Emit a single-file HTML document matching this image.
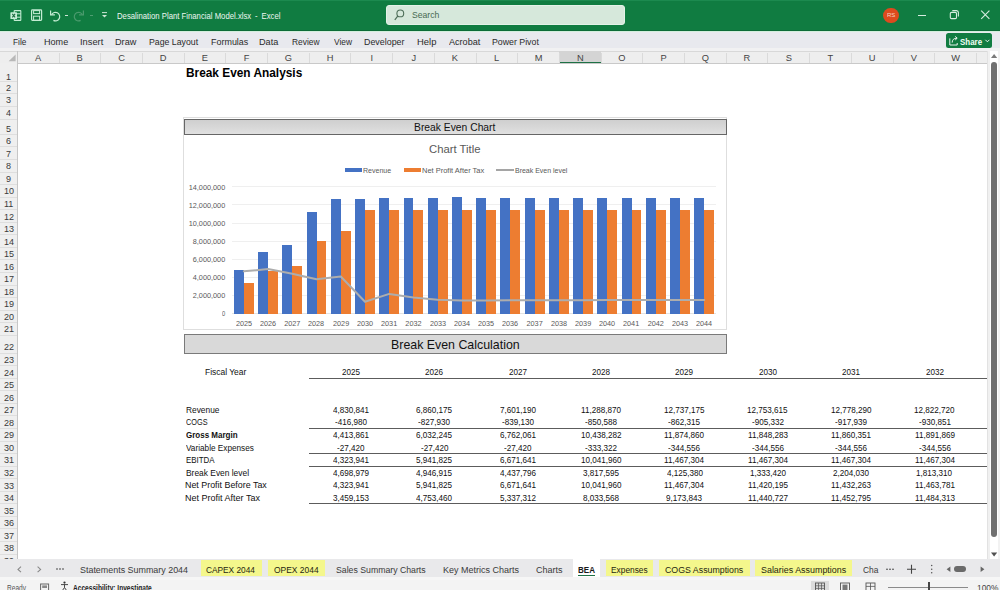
<!DOCTYPE html>
<html><head><meta charset="utf-8"><title>Desalination Plant Financial Model.xlsx - Excel</title>
<style>
*{box-sizing:border-box;margin:0;padding:0}
html,body{width:1000px;height:590px;overflow:hidden;background:#fff;font-family:"Liberation Sans", sans-serif;position:relative}
.a{position:absolute}
.t{position:absolute;white-space:nowrap;line-height:1;transform-origin:0 0}
svg{position:absolute;overflow:visible}
</style></head><body>

<div class="a" style="left:0.00px;top:0.00px;width:1000.00px;height:30.80px;background:#107c41;"></div>
<div class="a" style="left:0.00px;top:0.00px;width:1000.00px;height:1.20px;background:#1c8a4f;"></div>
<div class="a" style="left:0.00px;top:29.60px;width:1000.00px;height:1.20px;background:#0c6b37;"></div>
<div class="a" style="left:0.00px;top:30.70px;width:1000.00px;height:1.40px;background:#d3eedd;"></div>
<div class="t" style="left:116.98px;top:11.62px;font-size:8.8px;font-weight:400;color:#ecf7f0;transform:scaleX(0.8798);">Desalination Plant Financial Model.xlsx - Excel</div>
<div class="a" style="left:385.60px;top:5.30px;width:239.80px;height:19.90px;background:#d6e8db;border-radius:3px;border:1px solid #e4f2e8"></div>
<div class="t" style="left:412.21px;top:10.14px;font-size:9.6px;font-weight:400;color:#466a52;transform:scaleX(0.9002);">Search</div>
<svg style="left:0;top:0" width="1" height="1"><circle cx="400.3" cy="13.4" r="3.4" fill="none" stroke="#4d6e58" stroke-width="1.1"/><line x1="397.9" y1="15.8" x2="394.8" y2="19.9" stroke="#4d6e58" stroke-width="1.2"/></svg>
<div class="a" style="left:883.4px;top:7.5px;width:15.4px;height:15.4px;border-radius:50%;background:#dd4a1e"></div>
<div class="t" style="left:886.72px;top:13.34px;font-size:5.6px;font-weight:400;color:#f6d4c4;transform:scaleX(1.0771);">RS</div>
<div class="a" style="left:918.20px;top:15.20px;width:8.20px;height:1.10px;background:#d6ece0;"></div>
<svg style="left:0;top:0" width="1" height="1"><rect x="950.3" y="12.4" width="6.2" height="6.2" rx="1.2" fill="none" stroke="#d6ece0" stroke-width="1.1"/><path d="M952.3 10.6 H956.5 A2 2 0 0 1 958.4 12.6 V16.6" fill="none" stroke="#d6ece0" stroke-width="1.1"/></svg>
<svg style="left:0;top:0" width="1" height="1"><path d="M981.2 10.6 L989.4 18.8 M989.4 10.6 L981.2 18.8" stroke="#d6ece0" stroke-width="1.1"/></svg>
<svg style="left:0;top:0" width="1" height="1">
<rect x="14.2" y="10.6" width="6.6" height="9.8" rx="0.5" fill="none" stroke="#c4ecd3" stroke-width="1.1"/>
<path d="M16.6 13.8 H20.8 M16.6 17.2 H20.8" stroke="#c4ecd3" stroke-width="1"/>
<rect x="10.4" y="12.2" width="6.6" height="6.8" rx="0.6" fill="#c8eed8"/>
<path d="M12.3 13.9 L15.1 17.3 M15.1 13.9 L12.3 17.3" stroke="#1d6b40" stroke-width="1.1"/>
</svg>
<svg style="left:0;top:0" width="1" height="1">
<rect x="31.6" y="9.9" width="10" height="10.4" rx="0.8" fill="none" stroke="#c4ecd3" stroke-width="1.2"/>
<rect x="33.6" y="10.6" width="6" height="3.0" fill="none" stroke="#c4ecd3" stroke-width="1"/>
<rect x="33.6" y="16.2" width="6" height="4.1" fill="none" stroke="#c4ecd3" stroke-width="1"/>
</svg>
<svg style="left:0;top:0" width="1" height="1">
<path d="M51.6 14.6 A4.3 4.3 0 1 1 53.4 20.4" fill="none" stroke="#c4ecd3" stroke-width="1.2"/>
<path d="M50.6 10.6 V14.9 H54.9" fill="none" stroke="#c4ecd3" stroke-width="1.2"/>
</svg>
<div class="a" style="left:64.60px;top:14.80px;width:3.40px;height:1.10px;background:#cde6d6;"></div>
<svg style="left:0;top:0" width="1" height="1">
<path d="M82.4 14.6 A4.3 4.3 0 1 0 80.6 20.4" fill="none" stroke="#4a9a6d" stroke-width="1.2"/>
<path d="M83.4 10.6 V14.9 H79.1" fill="none" stroke="#4a9a6d" stroke-width="1.2"/>
</svg>
<div class="a" style="left:89.60px;top:14.80px;width:3.40px;height:1.10px;background:#4f9d72;"></div>
<svg style="left:0;top:0" width="1" height="1"><line x1="102" y1="12.6" x2="107" y2="12.6" stroke="#cde6d6" stroke-width="1"/><path d="M102 15 L104.5 17.6 L107 15 Z" fill="#cde6d6"/></svg>
<div class="a" style="left:0.00px;top:32.10px;width:1000.00px;height:15.80px;background:#e8e9ee;"></div>
<div class="a" style="left:0.00px;top:47.90px;width:1000.00px;height:3.10px;background:#f1f1f2;"></div>
<div class="t" style="left:13.24px;top:36.71px;font-size:9.4px;font-weight:400;color:#2b2b2b;transform:scaleX(0.8812);">File</div>
<div class="t" style="left:44.07px;top:36.71px;font-size:9.4px;font-weight:400;color:#2b2b2b;transform:scaleX(0.9675);">Home</div>
<div class="t" style="left:79.76px;top:36.71px;font-size:9.4px;font-weight:400;color:#2b2b2b;transform:scaleX(0.9908);">Insert</div>
<div class="t" style="left:115.27px;top:36.71px;font-size:9.4px;font-weight:400;color:#2b2b2b;transform:scaleX(0.9766);">Draw</div>
<div class="t" style="left:149.10px;top:36.71px;font-size:9.4px;font-weight:400;color:#2b2b2b;transform:scaleX(0.9330);">Page Layout</div>
<div class="t" style="left:210.68px;top:36.71px;font-size:9.4px;font-weight:400;color:#2b2b2b;transform:scaleX(0.9550);">Formulas</div>
<div class="t" style="left:259.17px;top:36.71px;font-size:9.4px;font-weight:400;color:#2b2b2b;transform:scaleX(0.9747);">Data</div>
<div class="t" style="left:291.83px;top:36.71px;font-size:9.4px;font-weight:400;color:#2b2b2b;transform:scaleX(0.8943);">Review</div>
<div class="t" style="left:333.66px;top:36.71px;font-size:9.4px;font-weight:400;color:#2b2b2b;transform:scaleX(0.8927);">View</div>
<div class="t" style="left:363.99px;top:36.71px;font-size:9.4px;font-weight:400;color:#2b2b2b;transform:scaleX(0.9470);">Developer</div>
<div class="t" style="left:416.94px;top:36.71px;font-size:9.4px;font-weight:400;color:#2b2b2b;transform:scaleX(1.0061);">Help</div>
<div class="t" style="left:448.70px;top:36.71px;font-size:9.4px;font-weight:400;color:#2b2b2b;transform:scaleX(0.9680);">Acrobat</div>
<div class="t" style="left:492.00px;top:36.71px;font-size:9.4px;font-weight:400;color:#2b2b2b;transform:scaleX(0.9362);">Power Pivot</div>
<div class="a" style="left:946.00px;top:33.00px;width:46.00px;height:15.40px;background:#107c41;border-radius:2.5px"></div>
<div class="t" style="left:959.56px;top:36.91px;font-size:9.4px;font-weight:700;color:#f0fff5;transform:scaleX(0.8464);">Share</div>
<svg style="left:0;top:0" width="1" height="1"><path d="M949.8 38.4 V45 H957.2 V43 M952.2 42.6 C952.2 39.8 953.8 38.2 956.8 38.2 M955.2 36.4 L957.2 38.2 L955.2 40" fill="none" stroke="#fff" stroke-width="0.9"/><path d="M985.4 39.8 L987.4 41.8 L989.4 39.8" fill="none" stroke="#fff" stroke-width="0.9"/></svg>
<div class="a" style="left:0.00px;top:51.00px;width:987.00px;height:12.40px;background:#eeeeee;"></div>
<div class="a" style="left:0.00px;top:50.50px;width:987.00px;height:1.00px;background:#d8d8d8;"></div>
<div class="a" style="left:17.30px;top:62.80px;width:969.70px;height:1.00px;background:#c9c9c9;"></div>
<div class="a" style="left:559.40px;top:51.40px;width:41.70px;height:12.00px;background:#d4d4d4;"></div>
<div class="a" style="left:559.40px;top:61.90px;width:41.70px;height:1.60px;background:#1e7145;"></div>
<div class="a" style="left:58.50px;top:53.00px;width:1.00px;height:9.80px;background:#dadada;"></div>
<div class="t" style="left:35.06px;top:53.59px;font-size:9.3px;font-weight:400;color:#444;">A</div>
<div class="a" style="left:100.20px;top:53.00px;width:1.00px;height:9.80px;background:#dadada;"></div>
<div class="t" style="left:76.62px;top:53.59px;font-size:9.3px;font-weight:400;color:#444;">B</div>
<div class="a" style="left:141.90px;top:53.00px;width:1.00px;height:9.80px;background:#dadada;"></div>
<div class="t" style="left:118.13px;top:53.59px;font-size:9.3px;font-weight:400;color:#444;">C</div>
<div class="a" style="left:183.60px;top:53.00px;width:1.00px;height:9.80px;background:#dadada;"></div>
<div class="t" style="left:159.74px;top:53.59px;font-size:9.3px;font-weight:400;color:#444;">D</div>
<div class="a" style="left:225.30px;top:53.00px;width:1.00px;height:9.80px;background:#dadada;"></div>
<div class="t" style="left:201.67px;top:53.59px;font-size:9.3px;font-weight:400;color:#444;">E</div>
<div class="a" style="left:267.00px;top:53.00px;width:1.00px;height:9.80px;background:#dadada;"></div>
<div class="t" style="left:243.63px;top:53.59px;font-size:9.3px;font-weight:400;color:#444;">F</div>
<div class="a" style="left:308.70px;top:53.00px;width:1.00px;height:9.80px;background:#dadada;"></div>
<div class="t" style="left:284.84px;top:53.59px;font-size:9.3px;font-weight:400;color:#444;">G</div>
<div class="a" style="left:350.40px;top:53.00px;width:1.00px;height:9.80px;background:#dadada;"></div>
<div class="t" style="left:326.70px;top:53.59px;font-size:9.3px;font-weight:400;color:#444;">H</div>
<div class="a" style="left:392.10px;top:53.00px;width:1.00px;height:9.80px;background:#dadada;"></div>
<div class="t" style="left:370.47px;top:53.59px;font-size:9.3px;font-weight:400;color:#444;">I</div>
<div class="a" style="left:433.80px;top:53.00px;width:1.00px;height:9.80px;background:#dadada;"></div>
<div class="t" style="left:411.40px;top:53.59px;font-size:9.3px;font-weight:400;color:#444;">J</div>
<div class="a" style="left:475.50px;top:53.00px;width:1.00px;height:9.80px;background:#dadada;"></div>
<div class="t" style="left:451.73px;top:53.59px;font-size:9.3px;font-weight:400;color:#444;">K</div>
<div class="a" style="left:517.20px;top:53.00px;width:1.00px;height:9.80px;background:#dadada;"></div>
<div class="t" style="left:494.04px;top:53.59px;font-size:9.3px;font-weight:400;color:#444;">L</div>
<div class="a" style="left:558.90px;top:53.00px;width:1.00px;height:9.80px;background:#dadada;"></div>
<div class="t" style="left:534.69px;top:53.59px;font-size:9.3px;font-weight:400;color:#444;">M</div>
<div class="a" style="left:600.60px;top:53.00px;width:1.00px;height:9.80px;background:#dadada;"></div>
<div class="t" style="left:576.90px;top:53.59px;font-size:9.3px;font-weight:400;color:#444;">N</div>
<div class="a" style="left:642.30px;top:53.00px;width:1.00px;height:9.80px;background:#dadada;"></div>
<div class="t" style="left:618.35px;top:53.59px;font-size:9.3px;font-weight:400;color:#444;">O</div>
<div class="a" style="left:684.00px;top:53.00px;width:1.00px;height:9.80px;background:#dadada;"></div>
<div class="t" style="left:660.42px;top:53.59px;font-size:9.3px;font-weight:400;color:#444;">P</div>
<div class="a" style="left:725.70px;top:53.00px;width:1.00px;height:9.80px;background:#dadada;"></div>
<div class="t" style="left:701.75px;top:53.59px;font-size:9.3px;font-weight:400;color:#444;">Q</div>
<div class="a" style="left:767.40px;top:53.00px;width:1.00px;height:9.80px;background:#dadada;"></div>
<div class="t" style="left:743.54px;top:53.59px;font-size:9.3px;font-weight:400;color:#444;">R</div>
<div class="a" style="left:809.10px;top:53.00px;width:1.00px;height:9.80px;background:#dadada;"></div>
<div class="t" style="left:785.66px;top:53.59px;font-size:9.3px;font-weight:400;color:#444;">S</div>
<div class="a" style="left:850.80px;top:53.00px;width:1.00px;height:9.80px;background:#dadada;"></div>
<div class="t" style="left:827.61px;top:53.59px;font-size:9.3px;font-weight:400;color:#444;">T</div>
<div class="a" style="left:892.50px;top:53.00px;width:1.00px;height:9.80px;background:#dadada;"></div>
<div class="t" style="left:868.80px;top:53.59px;font-size:9.3px;font-weight:400;color:#444;">U</div>
<div class="a" style="left:934.20px;top:53.00px;width:1.00px;height:9.80px;background:#dadada;"></div>
<div class="t" style="left:910.76px;top:53.59px;font-size:9.3px;font-weight:400;color:#444;">V</div>
<div class="a" style="left:975.90px;top:53.00px;width:1.00px;height:9.80px;background:#dadada;"></div>
<div class="t" style="left:951.16px;top:53.59px;font-size:9.3px;font-weight:400;color:#444;">W</div>
<svg style="left:0;top:0" width="1" height="1"><path d="M15.6 54.4 L15.6 61.2 L8.6 61.2 Z" fill="#b8b8b8"/></svg>
<div class="a" style="left:16.90px;top:51.00px;width:1.00px;height:508.00px;background:#c6c6c6;"></div>
<div class="a" style="left:0.00px;top:63.40px;width:16.90px;height:496.00px;background:#efefef;"></div>
<div class="a" style="left:0.00px;top:80.50px;width:16.90px;height:1.00px;background:#dedede;"></div>
<div class="t" style="left:6.26px;top:71.67px;font-size:9.8px;font-weight:400;color:#3a3a3a;transform:scaleX(0.9200);">1</div>
<div class="a" style="left:0.00px;top:93.10px;width:16.90px;height:1.00px;background:#dedede;"></div>
<div class="t" style="left:6.40px;top:82.87px;font-size:9.8px;font-weight:400;color:#3a3a3a;transform:scaleX(0.9200);">2</div>
<div class="a" style="left:0.00px;top:105.60px;width:16.90px;height:1.00px;background:#dedede;"></div>
<div class="t" style="left:6.40px;top:95.37px;font-size:9.8px;font-weight:400;color:#3a3a3a;transform:scaleX(0.9200);">3</div>
<div class="a" style="left:0.00px;top:118.50px;width:16.90px;height:1.00px;background:#dedede;"></div>
<div class="t" style="left:6.44px;top:108.27px;font-size:9.8px;font-weight:400;color:#3a3a3a;transform:scaleX(0.9200);">4</div>
<div class="a" style="left:0.00px;top:133.90px;width:16.90px;height:1.00px;background:#dedede;"></div>
<div class="t" style="left:6.40px;top:123.67px;font-size:9.8px;font-weight:400;color:#3a3a3a;transform:scaleX(0.9200);">5</div>
<div class="a" style="left:0.00px;top:146.45px;width:16.90px;height:1.00px;background:#dedede;"></div>
<div class="t" style="left:6.35px;top:136.22px;font-size:9.8px;font-weight:400;color:#3a3a3a;transform:scaleX(0.9200);">6</div>
<div class="a" style="left:0.00px;top:159.00px;width:16.90px;height:1.00px;background:#dedede;"></div>
<div class="t" style="left:6.40px;top:148.77px;font-size:9.8px;font-weight:400;color:#3a3a3a;transform:scaleX(0.9200);">7</div>
<div class="a" style="left:0.00px;top:171.55px;width:16.90px;height:1.00px;background:#dedede;"></div>
<div class="t" style="left:6.38px;top:161.32px;font-size:9.8px;font-weight:400;color:#3a3a3a;transform:scaleX(0.9200);">8</div>
<div class="a" style="left:0.00px;top:184.10px;width:16.90px;height:1.00px;background:#dedede;"></div>
<div class="t" style="left:6.40px;top:173.87px;font-size:9.8px;font-weight:400;color:#3a3a3a;transform:scaleX(0.9200);">9</div>
<div class="a" style="left:0.00px;top:196.65px;width:16.90px;height:1.00px;background:#dedede;"></div>
<div class="t" style="left:3.72px;top:186.42px;font-size:9.8px;font-weight:400;color:#3a3a3a;transform:scaleX(0.9200);">10</div>
<div class="a" style="left:0.00px;top:209.20px;width:16.90px;height:1.00px;background:#dedede;"></div>
<div class="t" style="left:4.10px;top:198.97px;font-size:9.8px;font-weight:400;color:#3a3a3a;transform:scaleX(0.9200);">11</div>
<div class="a" style="left:0.00px;top:221.75px;width:16.90px;height:1.00px;background:#dedede;"></div>
<div class="t" style="left:3.78px;top:211.52px;font-size:9.8px;font-weight:400;color:#3a3a3a;transform:scaleX(0.9200);">12</div>
<div class="a" style="left:0.00px;top:234.30px;width:16.90px;height:1.00px;background:#dedede;"></div>
<div class="t" style="left:3.74px;top:224.07px;font-size:9.8px;font-weight:400;color:#3a3a3a;transform:scaleX(0.9200);">13</div>
<div class="a" style="left:0.00px;top:246.85px;width:16.90px;height:1.00px;background:#dedede;"></div>
<div class="t" style="left:3.69px;top:236.62px;font-size:9.8px;font-weight:400;color:#3a3a3a;transform:scaleX(0.9200);">14</div>
<div class="a" style="left:0.00px;top:259.40px;width:16.90px;height:1.00px;background:#dedede;"></div>
<div class="t" style="left:3.74px;top:249.17px;font-size:9.8px;font-weight:400;color:#3a3a3a;transform:scaleX(0.9200);">15</div>
<div class="a" style="left:0.00px;top:271.95px;width:16.90px;height:1.00px;background:#dedede;"></div>
<div class="t" style="left:3.74px;top:261.72px;font-size:9.8px;font-weight:400;color:#3a3a3a;transform:scaleX(0.9200);">16</div>
<div class="a" style="left:0.00px;top:284.50px;width:16.90px;height:1.00px;background:#dedede;"></div>
<div class="t" style="left:3.78px;top:274.27px;font-size:9.8px;font-weight:400;color:#3a3a3a;transform:scaleX(0.9200);">17</div>
<div class="a" style="left:0.00px;top:297.05px;width:16.90px;height:1.00px;background:#dedede;"></div>
<div class="t" style="left:3.74px;top:286.82px;font-size:9.8px;font-weight:400;color:#3a3a3a;transform:scaleX(0.9200);">18</div>
<div class="a" style="left:0.00px;top:309.60px;width:16.90px;height:1.00px;background:#dedede;"></div>
<div class="t" style="left:3.76px;top:299.37px;font-size:9.8px;font-weight:400;color:#3a3a3a;transform:scaleX(0.9200);">19</div>
<div class="a" style="left:0.00px;top:322.15px;width:16.90px;height:1.00px;background:#dedede;"></div>
<div class="t" style="left:3.83px;top:311.92px;font-size:9.8px;font-weight:400;color:#3a3a3a;transform:scaleX(0.9200);">20</div>
<div class="a" style="left:0.00px;top:334.70px;width:16.90px;height:1.00px;background:#dedede;"></div>
<div class="t" style="left:3.87px;top:324.47px;font-size:9.8px;font-weight:400;color:#3a3a3a;transform:scaleX(0.9200);">21</div>
<div class="a" style="left:0.00px;top:352.70px;width:16.90px;height:1.00px;background:#dedede;"></div>
<div class="t" style="left:3.90px;top:342.47px;font-size:9.8px;font-weight:400;color:#3a3a3a;transform:scaleX(0.9200);">22</div>
<div class="a" style="left:0.00px;top:365.25px;width:16.90px;height:1.00px;background:#dedede;"></div>
<div class="t" style="left:3.85px;top:355.02px;font-size:9.8px;font-weight:400;color:#3a3a3a;transform:scaleX(0.9200);">23</div>
<div class="a" style="left:0.00px;top:377.80px;width:16.90px;height:1.00px;background:#dedede;"></div>
<div class="t" style="left:3.81px;top:367.57px;font-size:9.8px;font-weight:400;color:#3a3a3a;transform:scaleX(0.9200);">24</div>
<div class="a" style="left:0.00px;top:390.35px;width:16.90px;height:1.00px;background:#dedede;"></div>
<div class="t" style="left:3.85px;top:380.12px;font-size:9.8px;font-weight:400;color:#3a3a3a;transform:scaleX(0.9200);">25</div>
<div class="a" style="left:0.00px;top:402.90px;width:16.90px;height:1.00px;background:#dedede;"></div>
<div class="t" style="left:3.85px;top:392.67px;font-size:9.8px;font-weight:400;color:#3a3a3a;transform:scaleX(0.9200);">26</div>
<div class="a" style="left:0.00px;top:415.45px;width:16.90px;height:1.00px;background:#dedede;"></div>
<div class="t" style="left:3.90px;top:405.22px;font-size:9.8px;font-weight:400;color:#3a3a3a;transform:scaleX(0.9200);">27</div>
<div class="a" style="left:0.00px;top:428.00px;width:16.90px;height:1.00px;background:#dedede;"></div>
<div class="t" style="left:3.85px;top:417.77px;font-size:9.8px;font-weight:400;color:#3a3a3a;transform:scaleX(0.9200);">28</div>
<div class="a" style="left:0.00px;top:440.55px;width:16.90px;height:1.00px;background:#dedede;"></div>
<div class="t" style="left:3.87px;top:430.32px;font-size:9.8px;font-weight:400;color:#3a3a3a;transform:scaleX(0.9200);">29</div>
<div class="a" style="left:0.00px;top:453.10px;width:16.90px;height:1.00px;background:#dedede;"></div>
<div class="t" style="left:3.87px;top:442.87px;font-size:9.8px;font-weight:400;color:#3a3a3a;transform:scaleX(0.9200);">30</div>
<div class="a" style="left:0.00px;top:465.65px;width:16.90px;height:1.00px;background:#dedede;"></div>
<div class="t" style="left:3.92px;top:455.42px;font-size:9.8px;font-weight:400;color:#3a3a3a;transform:scaleX(0.9200);">31</div>
<div class="a" style="left:0.00px;top:478.20px;width:16.90px;height:1.00px;background:#dedede;"></div>
<div class="t" style="left:3.94px;top:467.97px;font-size:9.8px;font-weight:400;color:#3a3a3a;transform:scaleX(0.9200);">32</div>
<div class="a" style="left:0.00px;top:490.75px;width:16.90px;height:1.00px;background:#dedede;"></div>
<div class="t" style="left:3.90px;top:480.52px;font-size:9.8px;font-weight:400;color:#3a3a3a;transform:scaleX(0.9200);">33</div>
<div class="a" style="left:0.00px;top:503.30px;width:16.90px;height:1.00px;background:#dedede;"></div>
<div class="t" style="left:3.85px;top:493.07px;font-size:9.8px;font-weight:400;color:#3a3a3a;transform:scaleX(0.9200);">34</div>
<div class="a" style="left:0.00px;top:515.85px;width:16.90px;height:1.00px;background:#dedede;"></div>
<div class="t" style="left:3.90px;top:505.62px;font-size:9.8px;font-weight:400;color:#3a3a3a;transform:scaleX(0.9200);">35</div>
<div class="a" style="left:0.00px;top:528.40px;width:16.90px;height:1.00px;background:#dedede;"></div>
<div class="t" style="left:3.90px;top:518.17px;font-size:9.8px;font-weight:400;color:#3a3a3a;transform:scaleX(0.9200);">36</div>
<div class="a" style="left:0.00px;top:540.95px;width:16.90px;height:1.00px;background:#dedede;"></div>
<div class="t" style="left:3.94px;top:530.72px;font-size:9.8px;font-weight:400;color:#3a3a3a;transform:scaleX(0.9200);">37</div>
<div class="a" style="left:0.00px;top:553.50px;width:16.90px;height:1.00px;background:#dedede;"></div>
<div class="t" style="left:3.90px;top:543.27px;font-size:9.8px;font-weight:400;color:#3a3a3a;transform:scaleX(0.9200);">38</div>
<div class="a" style="left:0.00px;top:566.05px;width:16.90px;height:1.00px;background:#dedede;"></div>
<div class="t" style="left:3.92px;top:555.82px;font-size:9.8px;font-weight:400;color:#3a3a3a;transform:scaleX(0.9200);">39</div>
<div class="a" style="left:987.00px;top:51.00px;width:13.00px;height:508.00px;background:#ffffff;"></div>
<div class="a" style="left:987.00px;top:51.00px;width:3.00px;height:508.00px;background:#f0f0f0;"></div>
<div class="a" style="left:987.00px;top:51.00px;width:1.00px;height:508.00px;background:#e2e2e2;"></div>
<div class="a" style="left:998.00px;top:51.00px;width:2.00px;height:508.00px;background:#f2f2f2;"></div>
<div class="a" style="left:990.9px;top:62px;width:6.3px;height:474.8px;background:#707070;border-radius:3.2px"></div>
<svg style="left:0;top:0" width="1" height="1"><path d="M991 58 L994.1 54 L997.2 58 Z" fill="#7a7a7a"/><path d="M991 552.6 L994.1 556.6 L997.2 552.6 Z" fill="#505050"/></svg>
<div class="t" style="left:186.43px;top:67.22px;font-size:12.8px;font-weight:700;color:#000;transform:scaleX(0.9267);">Break Even Analysis</div>
<div class="a" style="left:183.4px;top:116.5px;width:544px;height:213.5px;background:#fff;border:1px solid #dedede"></div>
<div class="a" style="left:184.0px;top:118.9px;width:542.6px;height:16.2px;background:linear-gradient(#cfcfcf,#d9d9d9 60%,#e1e1e1);border:1.1px solid #666"></div>
<div class="t" style="left:414.07px;top:121.98px;font-size:11.2px;font-weight:400;color:#111;transform:scaleX(0.9220);">Break Even Chart</div>
<div class="t" style="left:429.03px;top:144.15px;font-size:11.0px;font-weight:400;color:#595959;transform:scaleX(1.0273);">Chart Title</div>
<div class="a" style="left:345.20px;top:167.80px;width:16.60px;height:4.60px;background:#4472c4;"></div>
<div class="t" style="left:363.44px;top:167.75px;font-size:6.3px;font-weight:400;color:#595959;transform:scaleX(1.1142);">Revenue</div>
<div class="a" style="left:404.00px;top:167.80px;width:17.00px;height:4.60px;background:#ed7d31;"></div>
<div class="t" style="left:422.20px;top:167.75px;font-size:6.3px;font-weight:400;color:#595959;transform:scaleX(1.1881);">Net Profit After Tax</div>
<div class="a" style="left:496.00px;top:169.30px;width:18.00px;height:1.80px;background:#a5a5a5;"></div>
<div class="t" style="left:515.04px;top:167.75px;font-size:6.3px;font-weight:400;color:#595959;transform:scaleX(1.1093);">Break Even level</div>
<div class="t" style="left:221.97px;top:310.00px;font-size:7.3px;font-weight:400;color:#595959;transform:scaleX(0.7991);">0</div>
<div class="a" style="left:231.60px;top:294.83px;width:484.80px;height:1.00px;background:#efefef;"></div>
<div class="t" style="left:192.76px;top:291.93px;font-size:7.3px;font-weight:400;color:#595959;">2,000,000</div>
<div class="a" style="left:231.60px;top:276.76px;width:484.80px;height:1.00px;background:#efefef;"></div>
<div class="t" style="left:192.76px;top:273.86px;font-size:7.3px;font-weight:400;color:#595959;">4,000,000</div>
<div class="a" style="left:231.60px;top:258.69px;width:484.80px;height:1.00px;background:#efefef;"></div>
<div class="t" style="left:192.76px;top:255.78px;font-size:7.3px;font-weight:400;color:#595959;">6,000,000</div>
<div class="a" style="left:231.60px;top:240.62px;width:484.80px;height:1.00px;background:#efefef;"></div>
<div class="t" style="left:192.76px;top:237.72px;font-size:7.3px;font-weight:400;color:#595959;">8,000,000</div>
<div class="a" style="left:231.60px;top:222.55px;width:484.80px;height:1.00px;background:#efefef;"></div>
<div class="t" style="left:188.70px;top:219.65px;font-size:7.3px;font-weight:400;color:#595959;">10,000,000</div>
<div class="a" style="left:231.60px;top:204.48px;width:484.80px;height:1.00px;background:#efefef;"></div>
<div class="t" style="left:188.70px;top:201.57px;font-size:7.3px;font-weight:400;color:#595959;">12,000,000</div>
<div class="a" style="left:231.60px;top:186.41px;width:484.80px;height:1.00px;background:#efefef;"></div>
<div class="t" style="left:188.70px;top:183.50px;font-size:7.3px;font-weight:400;color:#595959;">14,000,000</div>
<div class="a" style="left:231.60px;top:313.30px;width:484.80px;height:1.00px;background:#e3e3e3;"></div>
<div class="a" style="left:233.95px;top:270.15px;width:9.90px;height:43.65px;background:#4472c4;"></div>
<div class="a" style="left:243.85px;top:282.55px;width:9.90px;height:31.25px;background:#ed7d31;"></div>
<div class="t" style="left:235.74px;top:320.10px;font-size:7.3px;font-weight:400;color:#595959;transform:scaleX(0.9945);">2025</div>
<div class="a" style="left:258.18px;top:251.82px;width:9.90px;height:61.98px;background:#4472c4;"></div>
<div class="a" style="left:268.08px;top:270.85px;width:9.90px;height:42.95px;background:#ed7d31;"></div>
<div class="t" style="left:259.97px;top:320.10px;font-size:7.3px;font-weight:400;color:#595959;transform:scaleX(0.9945);">2026</div>
<div class="a" style="left:282.41px;top:245.12px;width:9.90px;height:68.68px;background:#4472c4;"></div>
<div class="a" style="left:292.31px;top:265.58px;width:9.90px;height:48.22px;background:#ed7d31;"></div>
<div class="t" style="left:284.20px;top:320.10px;font-size:7.3px;font-weight:400;color:#595959;">2027</div>
<div class="a" style="left:306.64px;top:211.81px;width:9.90px;height:101.99px;background:#4472c4;"></div>
<div class="a" style="left:316.54px;top:241.22px;width:9.90px;height:72.58px;background:#ed7d31;"></div>
<div class="t" style="left:308.43px;top:320.10px;font-size:7.3px;font-weight:400;color:#595959;transform:scaleX(0.9945);">2028</div>
<div class="a" style="left:330.87px;top:198.72px;width:9.90px;height:115.08px;background:#4472c4;"></div>
<div class="a" style="left:340.77px;top:230.91px;width:9.90px;height:82.89px;background:#ed7d31;"></div>
<div class="t" style="left:332.66px;top:320.10px;font-size:7.3px;font-weight:400;color:#595959;transform:scaleX(0.9968);">2029</div>
<div class="a" style="left:355.10px;top:198.57px;width:9.90px;height:115.23px;background:#4472c4;"></div>
<div class="a" style="left:365.00px;top:210.43px;width:9.90px;height:103.37px;background:#ed7d31;"></div>
<div class="t" style="left:356.89px;top:320.10px;font-size:7.3px;font-weight:400;color:#595959;transform:scaleX(0.9922);">2030</div>
<div class="a" style="left:379.33px;top:198.35px;width:9.90px;height:115.45px;background:#4472c4;"></div>
<div class="a" style="left:389.23px;top:210.32px;width:9.90px;height:103.48px;background:#ed7d31;"></div>
<div class="t" style="left:381.12px;top:320.10px;font-size:7.3px;font-weight:400;color:#595959;transform:scaleX(0.9968);">2031</div>
<div class="a" style="left:403.56px;top:197.95px;width:9.90px;height:115.85px;background:#4472c4;"></div>
<div class="a" style="left:413.46px;top:210.04px;width:9.90px;height:103.76px;background:#ed7d31;"></div>
<div class="t" style="left:405.35px;top:320.10px;font-size:7.3px;font-weight:400;color:#595959;">2032</div>
<div class="a" style="left:427.79px;top:197.70px;width:9.90px;height:116.10px;background:#4472c4;"></div>
<div class="a" style="left:437.69px;top:209.90px;width:9.90px;height:103.90px;background:#ed7d31;"></div>
<div class="t" style="left:429.58px;top:320.10px;font-size:7.3px;font-weight:400;color:#595959;transform:scaleX(0.9945);">2033</div>
<div class="a" style="left:452.02px;top:197.43px;width:9.90px;height:116.37px;background:#4472c4;"></div>
<div class="a" style="left:461.92px;top:209.72px;width:9.90px;height:104.08px;background:#ed7d31;"></div>
<div class="t" style="left:453.81px;top:320.10px;font-size:7.3px;font-weight:400;color:#595959;transform:scaleX(0.9899);">2034</div>
<div class="a" style="left:476.25px;top:197.52px;width:9.90px;height:116.28px;background:#4472c4;"></div>
<div class="a" style="left:486.15px;top:209.90px;width:9.90px;height:103.90px;background:#ed7d31;"></div>
<div class="t" style="left:478.04px;top:320.10px;font-size:7.3px;font-weight:400;color:#595959;transform:scaleX(0.9945);">2035</div>
<div class="a" style="left:500.48px;top:197.61px;width:9.90px;height:116.19px;background:#4472c4;"></div>
<div class="a" style="left:510.38px;top:209.90px;width:9.90px;height:103.90px;background:#ed7d31;"></div>
<div class="t" style="left:502.27px;top:320.10px;font-size:7.3px;font-weight:400;color:#595959;transform:scaleX(0.9945);">2036</div>
<div class="a" style="left:524.71px;top:197.61px;width:9.90px;height:116.19px;background:#4472c4;"></div>
<div class="a" style="left:534.61px;top:209.90px;width:9.90px;height:103.90px;background:#ed7d31;"></div>
<div class="t" style="left:526.50px;top:320.10px;font-size:7.3px;font-weight:400;color:#595959;">2037</div>
<div class="a" style="left:548.94px;top:197.61px;width:9.90px;height:116.19px;background:#4472c4;"></div>
<div class="a" style="left:558.84px;top:209.90px;width:9.90px;height:103.90px;background:#ed7d31;"></div>
<div class="t" style="left:550.73px;top:320.10px;font-size:7.3px;font-weight:400;color:#595959;transform:scaleX(0.9945);">2038</div>
<div class="a" style="left:573.17px;top:197.61px;width:9.90px;height:116.19px;background:#4472c4;"></div>
<div class="a" style="left:583.07px;top:209.90px;width:9.90px;height:103.90px;background:#ed7d31;"></div>
<div class="t" style="left:574.96px;top:320.10px;font-size:7.3px;font-weight:400;color:#595959;transform:scaleX(0.9968);">2039</div>
<div class="a" style="left:597.40px;top:197.61px;width:9.90px;height:116.19px;background:#4472c4;"></div>
<div class="a" style="left:607.30px;top:209.90px;width:9.90px;height:103.90px;background:#ed7d31;"></div>
<div class="t" style="left:599.19px;top:320.10px;font-size:7.3px;font-weight:400;color:#595959;transform:scaleX(0.9922);">2040</div>
<div class="a" style="left:621.63px;top:197.61px;width:9.90px;height:116.19px;background:#4472c4;"></div>
<div class="a" style="left:631.53px;top:209.90px;width:9.90px;height:103.90px;background:#ed7d31;"></div>
<div class="t" style="left:623.42px;top:320.10px;font-size:7.3px;font-weight:400;color:#595959;transform:scaleX(0.9968);">2041</div>
<div class="a" style="left:645.86px;top:197.61px;width:9.90px;height:116.19px;background:#4472c4;"></div>
<div class="a" style="left:655.76px;top:209.90px;width:9.90px;height:103.90px;background:#ed7d31;"></div>
<div class="t" style="left:647.65px;top:320.10px;font-size:7.3px;font-weight:400;color:#595959;">2042</div>
<div class="a" style="left:670.09px;top:197.61px;width:9.90px;height:116.19px;background:#4472c4;"></div>
<div class="a" style="left:679.99px;top:209.90px;width:9.90px;height:103.90px;background:#ed7d31;"></div>
<div class="t" style="left:671.88px;top:320.10px;font-size:7.3px;font-weight:400;color:#595959;transform:scaleX(0.9945);">2043</div>
<div class="a" style="left:694.32px;top:197.61px;width:9.90px;height:116.19px;background:#4472c4;"></div>
<div class="a" style="left:704.22px;top:209.90px;width:9.90px;height:103.90px;background:#ed7d31;"></div>
<div class="t" style="left:696.11px;top:320.10px;font-size:7.3px;font-weight:400;color:#595959;transform:scaleX(0.9899);">2044</div>
<svg style="left:0;top:0" width="1" height="1"><path d="M243.85,271.34 L268.08,269.10 L292.31,273.70 L316.54,279.31 L340.77,276.53 L365.00,301.75 L389.23,293.89 L413.46,297.42 L437.69,299.71 L461.92,300.52 L486.15,300.43 L510.38,300.25 L534.61,300.25 L558.84,300.16 L583.07,300.16 L607.30,300.07 L631.53,300.07 L655.76,300.07 L679.99,299.98 L704.22,299.98" fill="none" stroke="#adadad" stroke-width="2.0" stroke-linecap="round" stroke-linejoin="round"/></svg>
<div class="a" style="left:184.0px;top:334.0px;width:542.6px;height:19.8px;background:#d9d9d9;border:1.2px solid #7a7a7a"></div>
<div class="t" style="left:391.01px;top:338.82px;font-size:12.8px;font-weight:400;color:#111;transform:scaleX(0.9672);">Break Even Calculation</div>
<div class="t" style="left:205.22px;top:368.32px;font-size:8.8px;font-weight:400;color:#111;transform:scaleX(0.9598);">Fiscal Year</div>
<div class="t" style="left:341.83px;top:368.32px;font-size:8.8px;font-weight:400;color:#111;transform:scaleX(0.9226);">2025</div>
<div class="t" style="left:425.23px;top:368.32px;font-size:8.8px;font-weight:400;color:#111;transform:scaleX(0.9226);">2026</div>
<div class="t" style="left:508.67px;top:368.32px;font-size:8.8px;font-weight:400;color:#111;transform:scaleX(0.9226);">2027</div>
<div class="t" style="left:592.03px;top:368.32px;font-size:8.8px;font-weight:400;color:#111;transform:scaleX(0.9226);">2028</div>
<div class="t" style="left:675.45px;top:368.32px;font-size:8.8px;font-weight:400;color:#111;transform:scaleX(0.9226);">2029</div>
<div class="t" style="left:758.81px;top:368.32px;font-size:8.8px;font-weight:400;color:#111;transform:scaleX(0.9226);">2030</div>
<div class="t" style="left:842.25px;top:368.32px;font-size:8.8px;font-weight:400;color:#111;transform:scaleX(0.9226);">2031</div>
<div class="t" style="left:925.67px;top:368.32px;font-size:8.8px;font-weight:400;color:#111;transform:scaleX(0.9226);">2032</div>
<div class="t" style="left:185.53px;top:405.87px;font-size:8.8px;font-weight:400;color:#111;transform:scaleX(0.9501);">Revenue</div>
<div class="t" style="left:332.94px;top:405.87px;font-size:8.8px;font-weight:400;color:#111;transform:scaleX(0.9226);">4,830,841</div>
<div class="t" style="left:416.20px;top:405.87px;font-size:8.8px;font-weight:400;color:#111;transform:scaleX(0.9226);">6,860,175</div>
<div class="t" style="left:499.58px;top:405.87px;font-size:8.8px;font-weight:400;color:#111;transform:scaleX(0.9226);">7,601,190</div>
<div class="t" style="left:580.93px;top:405.87px;font-size:8.8px;font-weight:400;color:#111;transform:scaleX(0.9226);">11,288,870</div>
<div class="t" style="left:664.04px;top:405.87px;font-size:8.8px;font-weight:400;color:#111;transform:scaleX(0.9226);">12,737,175</div>
<div class="t" style="left:747.44px;top:405.87px;font-size:8.8px;font-weight:400;color:#111;transform:scaleX(0.9226);">12,753,615</div>
<div class="t" style="left:830.82px;top:405.87px;font-size:8.8px;font-weight:400;color:#111;transform:scaleX(0.9226);">12,778,290</div>
<div class="t" style="left:914.22px;top:405.87px;font-size:8.8px;font-weight:400;color:#111;transform:scaleX(0.9226);">12,822,720</div>
<div class="t" style="left:185.83px;top:418.42px;font-size:8.8px;font-weight:400;color:#111;transform:scaleX(0.8333);">COGS</div>
<div class="t" style="left:334.85px;top:418.42px;font-size:8.8px;font-weight:400;color:#111;transform:scaleX(0.9226);">-416,980</div>
<div class="t" style="left:418.25px;top:418.42px;font-size:8.8px;font-weight:400;color:#111;transform:scaleX(0.9226);">-827,930</div>
<div class="t" style="left:501.65px;top:418.42px;font-size:8.8px;font-weight:400;color:#111;transform:scaleX(0.9226);">-839,130</div>
<div class="t" style="left:585.07px;top:418.42px;font-size:8.8px;font-weight:400;color:#111;transform:scaleX(0.9226);">-850,588</div>
<div class="t" style="left:668.47px;top:418.42px;font-size:8.8px;font-weight:400;color:#111;transform:scaleX(0.9226);">-862,315</div>
<div class="t" style="left:751.91px;top:418.42px;font-size:8.8px;font-weight:400;color:#111;transform:scaleX(0.9226);">-905,332</div>
<div class="t" style="left:835.29px;top:418.42px;font-size:8.8px;font-weight:400;color:#111;transform:scaleX(0.9226);">-917,939</div>
<div class="t" style="left:918.69px;top:418.42px;font-size:8.8px;font-weight:400;color:#111;transform:scaleX(0.9226);">-930,851</div>
<div class="t" style="left:185.88px;top:430.97px;font-size:8.8px;font-weight:700;color:#111;transform:scaleX(0.9098);">Gross Margin</div>
<div class="t" style="left:332.94px;top:430.97px;font-size:8.8px;font-weight:400;color:#111;transform:scaleX(0.9226);">4,413,861</div>
<div class="t" style="left:416.20px;top:430.97px;font-size:8.8px;font-weight:400;color:#111;transform:scaleX(0.9226);">6,032,245</div>
<div class="t" style="left:499.62px;top:430.97px;font-size:8.8px;font-weight:400;color:#111;transform:scaleX(0.9226);">6,762,061</div>
<div class="t" style="left:580.68px;top:430.97px;font-size:8.8px;font-weight:400;color:#111;transform:scaleX(0.9226);">10,438,282</div>
<div class="t" style="left:664.33px;top:430.97px;font-size:8.8px;font-weight:400;color:#111;transform:scaleX(0.9226);">11,874,860</div>
<div class="t" style="left:747.75px;top:430.97px;font-size:8.8px;font-weight:400;color:#111;transform:scaleX(0.9226);">11,848,283</div>
<div class="t" style="left:831.17px;top:430.97px;font-size:8.8px;font-weight:400;color:#111;transform:scaleX(0.9226);">11,860,351</div>
<div class="t" style="left:914.57px;top:430.97px;font-size:8.8px;font-weight:400;color:#111;transform:scaleX(0.9226);">11,891,869</div>
<div class="t" style="left:186.16px;top:443.52px;font-size:8.8px;font-weight:400;color:#111;transform:scaleX(0.9340);">Variable Expenses</div>
<div class="t" style="left:337.10px;top:443.52px;font-size:8.8px;font-weight:400;color:#111;transform:scaleX(0.9226);">-27,420</div>
<div class="t" style="left:420.50px;top:443.52px;font-size:8.8px;font-weight:400;color:#111;transform:scaleX(0.9226);">-27,420</div>
<div class="t" style="left:503.90px;top:443.52px;font-size:8.8px;font-weight:400;color:#111;transform:scaleX(0.9226);">-27,420</div>
<div class="t" style="left:585.11px;top:443.52px;font-size:8.8px;font-weight:400;color:#111;transform:scaleX(0.9226);">-333,322</div>
<div class="t" style="left:668.47px;top:443.52px;font-size:8.8px;font-weight:400;color:#111;transform:scaleX(0.9226);">-344,556</div>
<div class="t" style="left:751.87px;top:443.52px;font-size:8.8px;font-weight:400;color:#111;transform:scaleX(0.9226);">-344,556</div>
<div class="t" style="left:835.27px;top:443.52px;font-size:8.8px;font-weight:400;color:#111;transform:scaleX(0.9226);">-344,556</div>
<div class="t" style="left:918.67px;top:443.52px;font-size:8.8px;font-weight:400;color:#111;transform:scaleX(0.9226);">-344,556</div>
<div class="t" style="left:185.57px;top:456.07px;font-size:8.8px;font-weight:400;color:#111;transform:scaleX(0.9014);">EBITDA</div>
<div class="t" style="left:332.94px;top:456.07px;font-size:8.8px;font-weight:400;color:#111;transform:scaleX(0.9226);">4,323,941</div>
<div class="t" style="left:416.24px;top:456.07px;font-size:8.8px;font-weight:400;color:#111;transform:scaleX(0.9226);">5,941,825</div>
<div class="t" style="left:499.62px;top:456.07px;font-size:8.8px;font-weight:400;color:#111;transform:scaleX(0.9226);">6,671,641</div>
<div class="t" style="left:580.62px;top:456.07px;font-size:8.8px;font-weight:400;color:#111;transform:scaleX(0.9226);">10,041,960</div>
<div class="t" style="left:664.31px;top:456.07px;font-size:8.8px;font-weight:400;color:#111;transform:scaleX(0.9226);">11,467,304</div>
<div class="t" style="left:747.71px;top:456.07px;font-size:8.8px;font-weight:400;color:#111;transform:scaleX(0.9226);">11,467,304</div>
<div class="t" style="left:831.11px;top:456.07px;font-size:8.8px;font-weight:400;color:#111;transform:scaleX(0.9226);">11,467,304</div>
<div class="t" style="left:914.51px;top:456.07px;font-size:8.8px;font-weight:400;color:#111;transform:scaleX(0.9226);">11,467,304</div>
<div class="t" style="left:185.53px;top:468.62px;font-size:8.8px;font-weight:400;color:#111;transform:scaleX(0.9548);">Break Even level</div>
<div class="t" style="left:332.94px;top:468.62px;font-size:8.8px;font-weight:400;color:#111;transform:scaleX(0.9226);">4,698,979</div>
<div class="t" style="left:416.32px;top:468.62px;font-size:8.8px;font-weight:400;color:#111;transform:scaleX(0.9226);">4,946,915</div>
<div class="t" style="left:499.72px;top:468.62px;font-size:8.8px;font-weight:400;color:#111;transform:scaleX(0.9226);">4,437,796</div>
<div class="t" style="left:583.04px;top:468.62px;font-size:8.8px;font-weight:400;color:#111;transform:scaleX(0.9226);">3,817,595</div>
<div class="t" style="left:666.50px;top:468.62px;font-size:8.8px;font-weight:400;color:#111;transform:scaleX(0.9226);">4,125,380</div>
<div class="t" style="left:749.67px;top:468.62px;font-size:8.8px;font-weight:400;color:#111;transform:scaleX(0.9226);">1,333,420</div>
<div class="t" style="left:833.18px;top:468.62px;font-size:8.8px;font-weight:400;color:#111;transform:scaleX(0.9226);">2,204,030</div>
<div class="t" style="left:916.47px;top:468.62px;font-size:8.8px;font-weight:400;color:#111;transform:scaleX(0.9226);">1,813,310</div>
<div class="t" style="left:185.49px;top:481.17px;font-size:8.8px;font-weight:400;color:#111;transform:scaleX(1.0093);">Net Profit Before Tax</div>
<div class="t" style="left:332.94px;top:481.17px;font-size:8.8px;font-weight:400;color:#111;transform:scaleX(0.9226);">4,323,941</div>
<div class="t" style="left:416.24px;top:481.17px;font-size:8.8px;font-weight:400;color:#111;transform:scaleX(0.9226);">5,941,825</div>
<div class="t" style="left:499.62px;top:481.17px;font-size:8.8px;font-weight:400;color:#111;transform:scaleX(0.9226);">6,671,641</div>
<div class="t" style="left:580.62px;top:481.17px;font-size:8.8px;font-weight:400;color:#111;transform:scaleX(0.9226);">10,041,960</div>
<div class="t" style="left:664.31px;top:481.17px;font-size:8.8px;font-weight:400;color:#111;transform:scaleX(0.9226);">11,467,304</div>
<div class="t" style="left:747.75px;top:481.17px;font-size:8.8px;font-weight:400;color:#111;transform:scaleX(0.9226);">11,420,195</div>
<div class="t" style="left:831.15px;top:481.17px;font-size:8.8px;font-weight:400;color:#111;transform:scaleX(0.9226);">11,432,263</div>
<div class="t" style="left:914.57px;top:481.17px;font-size:8.8px;font-weight:400;color:#111;transform:scaleX(0.9226);">11,463,781</div>
<div class="t" style="left:185.48px;top:493.72px;font-size:8.8px;font-weight:400;color:#111;transform:scaleX(1.0245);">Net Profit After Tax</div>
<div class="t" style="left:332.84px;top:493.72px;font-size:8.8px;font-weight:400;color:#111;transform:scaleX(0.9226);">3,459,153</div>
<div class="t" style="left:416.30px;top:493.72px;font-size:8.8px;font-weight:400;color:#111;transform:scaleX(0.9226);">4,753,460</div>
<div class="t" style="left:499.68px;top:493.72px;font-size:8.8px;font-weight:400;color:#111;transform:scaleX(0.9226);">5,337,312</div>
<div class="t" style="left:583.02px;top:493.72px;font-size:8.8px;font-weight:400;color:#111;transform:scaleX(0.9226);">8,033,568</div>
<div class="t" style="left:666.42px;top:493.72px;font-size:8.8px;font-weight:400;color:#111;transform:scaleX(0.9226);">9,173,843</div>
<div class="t" style="left:747.79px;top:493.72px;font-size:8.8px;font-weight:400;color:#111;transform:scaleX(0.9226);">11,440,727</div>
<div class="t" style="left:831.15px;top:493.72px;font-size:8.8px;font-weight:400;color:#111;transform:scaleX(0.9226);">11,452,795</div>
<div class="t" style="left:914.55px;top:493.72px;font-size:8.8px;font-weight:400;color:#111;transform:scaleX(0.9226);">11,484,313</div>
<div class="a" style="left:308.80px;top:377.75px;width:678.20px;height:1.10px;background:#5c5c5c;"></div>
<div class="a" style="left:308.80px;top:427.95px;width:678.20px;height:1.10px;background:#5c5c5c;"></div>
<div class="a" style="left:308.80px;top:453.05px;width:678.20px;height:1.10px;background:#5c5c5c;"></div>
<div class="a" style="left:308.80px;top:465.60px;width:678.20px;height:1.10px;background:#5c5c5c;"></div>
<div class="a" style="left:308.80px;top:503.25px;width:678.20px;height:1.10px;background:#5c5c5c;"></div>
<div class="a" style="left:0.00px;top:559.20px;width:1000.00px;height:18.20px;background:#e9e9eb;"></div>
<div class="a" style="left:0.00px;top:577.40px;width:1000.00px;height:2.60px;background:#f6f6f6;"></div>
<svg style="left:0;top:0" width="1" height="1"><path d="M21 566.6 L18 569.4 L21 572.2" fill="none" stroke="#888" stroke-width="1.1"/><path d="M37.6 566.6 L40.6 569.4 L37.6 572.2" fill="none" stroke="#888" stroke-width="1.1"/><circle cx="57" cy="569" r="0.8" fill="#333"/><circle cx="60" cy="569" r="0.8" fill="#333"/><circle cx="63" cy="569" r="0.8" fill="#333"/></svg>
<div class="t" style="left:80.20px;top:565.14px;font-size:9.6px;font-weight:400;color:#3a3a3a;transform:scaleX(0.9292);">Statements Summary 2044</div>
<div class="a" style="left:201.00px;top:560.20px;width:61.20px;height:16.10px;background:#f4f78c;"></div>
<div class="t" style="left:206.48px;top:565.14px;font-size:9.6px;font-weight:400;color:#1f1f10;transform:scaleX(0.8660);">CAPEX 2044</div>
<div class="a" style="left:268.00px;top:560.20px;width:57.00px;height:16.10px;background:#f4f78c;"></div>
<div class="t" style="left:273.62px;top:565.14px;font-size:9.6px;font-weight:400;color:#1f1f10;transform:scaleX(0.8806);">OPEX 2044</div>
<div class="t" style="left:335.61px;top:565.14px;font-size:9.6px;font-weight:400;color:#3a3a3a;transform:scaleX(0.9089);">Sales Summary Charts</div>
<div class="t" style="left:443.03px;top:565.14px;font-size:9.6px;font-weight:400;color:#3a3a3a;transform:scaleX(0.9379);">Key Metrics Charts</div>
<div class="t" style="left:535.55px;top:565.14px;font-size:9.6px;font-weight:400;color:#3a3a3a;transform:scaleX(0.9379);">Charts</div>
<div class="a" style="left:572.50px;top:559.20px;width:27.50px;height:18.20px;background:#ffffff;"></div>
<div class="t" style="left:578.23px;top:565.14px;font-size:9.6px;font-weight:700;color:#1a1a1a;transform:scaleX(0.8380);">BEA</div>
<div class="a" style="left:578.20px;top:574.80px;width:16.60px;height:1.30px;background:#1e7145;"></div>
<div class="a" style="left:606.00px;top:560.20px;width:47.00px;height:16.10px;background:#f4f78c;"></div>
<div class="t" style="left:611.08px;top:565.14px;font-size:9.6px;font-weight:400;color:#1f1f10;transform:scaleX(0.8711);">Expenses</div>
<div class="a" style="left:658.75px;top:560.20px;width:91.25px;height:16.10px;background:#f4f78c;"></div>
<div class="t" style="left:665.06px;top:565.14px;font-size:9.6px;font-weight:400;color:#1f1f10;transform:scaleX(0.9169);">COGS Assumptions</div>
<div class="a" style="left:754.50px;top:560.20px;width:97.50px;height:16.10px;background:#f4f78c;"></div>
<div class="t" style="left:760.60px;top:565.14px;font-size:9.6px;font-weight:400;color:#1f1f10;transform:scaleX(0.9285);">Salaries Assumptions</div>
<div class="t" style="left:863.33px;top:565.14px;font-size:9.6px;font-weight:400;color:#3a3a3a;transform:scaleX(0.8754);">Cha</div>
<svg style="left:0;top:0" width="1" height="1"><circle cx="887" cy="569.2" r="0.8" fill="#333"/><circle cx="890" cy="569.2" r="0.8" fill="#333"/><circle cx="893" cy="569.2" r="0.8" fill="#333"/><path d="M907 569.2 H916 M911.5 564.7 V573.7" stroke="#444" stroke-width="1.1"/><circle cx="931.7" cy="565.6" r="0.75" fill="#555"/><circle cx="931.7" cy="569.2" r="0.75" fill="#555"/><circle cx="931.7" cy="572.8" r="0.75" fill="#555"/><path d="M950.4 566.4 L946.6 569.2 L950.4 572 Z" fill="#666"/><path d="M980.6 566.4 L984.4 569.2 L980.6 572 Z" fill="#666"/></svg>
<div class="a" style="left:953.50px;top:566.20px;width:12.00px;height:6.00px;background:#6a6a6a;border-radius:3px"></div>
<div class="a" style="left:0.00px;top:580.00px;width:1000.00px;height:10.00px;background:#f3f3f3;"></div>
<div class="t" style="left:7.17px;top:584.22px;font-size:8.8px;font-weight:400;color:#555;transform:scaleX(0.7481);">Ready</div>
<div class="a" style="left:811.00px;top:580.60px;width:18.00px;height:9.40px;background:#dcdcdc;"></div>
<svg style="left:0;top:0" width="1" height="1"><rect x="40.6" y="584" width="8" height="7" fill="none" stroke="#666" stroke-width="1"/><rect x="42.2" y="585.4" width="4.8" height="2.6" fill="#888"/><path d="M61 584.6 H68 M64.5 584.6 V587.5 L62.4 590.5 M64.5 587.5 L66.6 590.5" fill="none" stroke="#333" stroke-width="0.9"/><circle cx="64.5" cy="582.6" r="1.1" fill="#333"/></svg>
<div class="t" style="left:72.64px;top:584.22px;font-size:8.8px;font-weight:700;color:#1e1e1e;transform:scaleX(0.7493);">Accessibility: Investigate</div>
<svg style="left:0;top:0" width="1" height="1"><rect x="815.5" y="583" width="9" height="8" fill="none" stroke="#555" stroke-width="0.9"/><path d="M815.5 585.8 H824.5 M815.5 588.4 H824.5 M818.5 583 V591 M821.5 583 V591" stroke="#555" stroke-width="0.7"/><rect x="840.5" y="583" width="9" height="8" fill="none" stroke="#555" stroke-width="0.9"/><rect x="842.5" y="584.6" width="5" height="6" fill="#777"/><rect x="866" y="583" width="9" height="8" fill="none" stroke="#555" stroke-width="0.9"/><path d="M866 586.4 H875 M870.5 583 V591" stroke="#555" stroke-width="0.8"/></svg>
<div class="a" style="left:888.00px;top:587.00px;width:80.00px;height:0.90px;background:#8a8a8a;"></div>
<div class="a" style="left:927.80px;top:582.00px;width:2.40px;height:8.00px;background:#444;"></div>
<div class="t" style="left:977.37px;top:584.39px;font-size:8.6px;font-weight:400;color:#444;transform:scaleX(0.9777);">100%</div>
</body></html>
